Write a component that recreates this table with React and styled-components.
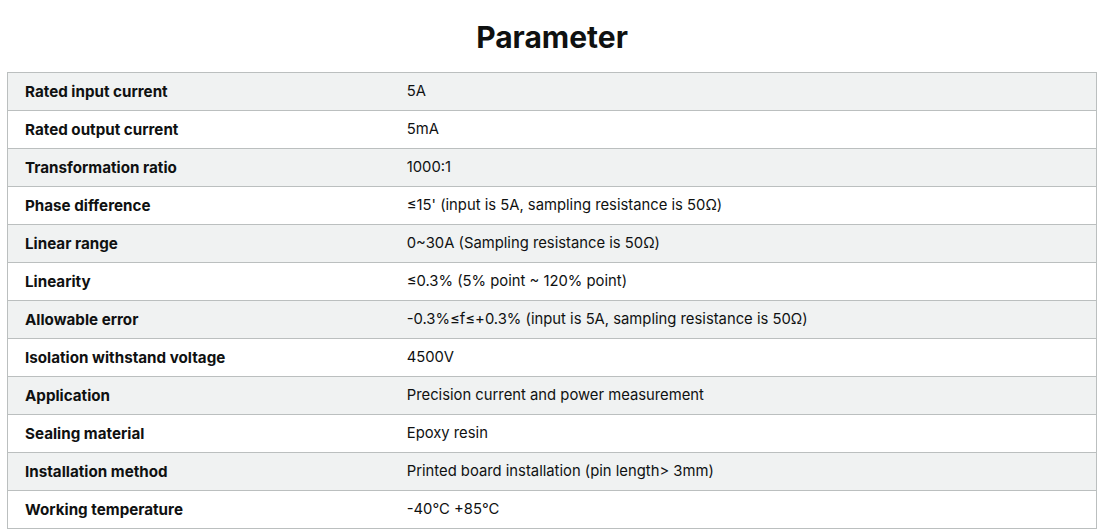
import React from "react";
import styled, { createGlobalStyle } from "styled-components";

const Global = createGlobalStyle`
  html, body { margin: 0; padding: 0; background: #ffffff; }
  body { font-family: Inter, "Open Sans", Arial, sans-serif; color: #0f1111; }
`;

const Page = styled.div`
  padding: 0 1px 0 7px;
`;

const Title = styled.h2`
  margin: 0;
  height: 72px;
  display: flex;
  align-items: center;
  justify-content: center;
  padding-top: 2px;
  box-sizing: border-box;
  font-size: 30px;
  font-weight: 700;
  color: #0f1111;
`;

const Table = styled.table`
  width: 100%;
  border-collapse: collapse;
  table-layout: fixed;
  border: 1px solid #bbbfbf;
`;

const Row = styled.tr`
  background: ${(p) => (p.$shaded ? "#f0f2f2" : "#ffffff")};
  border-top: 1px solid #bbbfbf;
  height: 38px;
`;

const LabelCell = styled.td`
  box-sizing: border-box;
  width: 35.1%;
  padding: 0 17px;
  font-size: 15.2px;
  line-height: 19px;
  font-weight: 700;
  vertical-align: middle;
  color: #0f1111;
`;

const ValueCell = styled.td`
  padding: 0 16px 0 17px;
  font-size: 14.8px;
  line-height: 19px;
  font-weight: 400;
  vertical-align: middle;
  color: #0f1111;
`;

const rows = [
  ["Rated input current", "5A"],
  ["Rated output current", "5mA"],
  ["Transformation ratio", "1000:1"],
  ["Phase difference", "≤15' (input is 5A, sampling resistance is 50Ω)"],
  ["Linear range", "0~30A (Sampling resistance is 50Ω)"],
  ["Linearity", "≤0.3% (5% point ~ 120% point)"],
  ["Allowable error", "-0.3%≤f≤+0.3% (input is 5A, sampling resistance is 50Ω)"],
  ["Isolation withstand voltage", "4500V"],
  ["Application", "Precision current and power measurement"],
  ["Sealing material", "Epoxy resin"],
  ["Installation method", "Printed board installation (pin length> 3mm)"],
  ["Working temperature", "-40°C +85°C"],
];

export default function App() {
  return (
    <Page>
      <Global />
      <Title>Parameter</Title>
      <Table>
        <tbody>
          {rows.map(([k, v], i) => (
            <Row key={k} $shaded={i % 2 === 0}>
              <LabelCell>{k}</LabelCell>
              <ValueCell>{v}</ValueCell>
            </Row>
          ))}
        </tbody>
      </Table>
    </Page>
  );
}
